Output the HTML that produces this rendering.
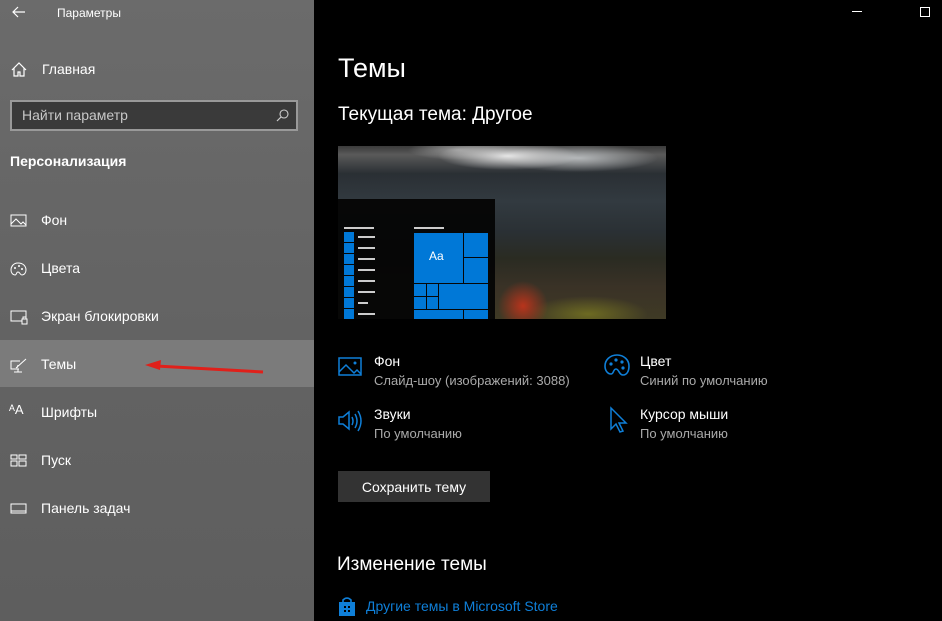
<!DOCTYPE html>
<html><head><meta charset="utf-8"><style>
*{margin:0;padding:0;box-sizing:border-box}
body{width:942px;height:621px;overflow:hidden;background:#000;font-family:"Segoe UI","Liberation Sans",sans-serif;position:relative;color:#fff}
.side{position:absolute;left:0;top:0;width:314px;height:621px;background:linear-gradient(180deg,#6b6b6b,#626262 60%,#5e5e5e)}
.t{position:absolute;white-space:nowrap}
.item{position:absolute;left:0;width:314px;height:48px}
.item .t{left:41px;top:16px;font-size:14px;color:#fff}
.item svg{position:absolute;left:10px;top:18px}
.prev{position:absolute;left:338px;top:146px;width:328px;height:173px;overflow:hidden;
background:
radial-gradient(ellipse 70px 14px at 170px 10px,#e6e6e6,rgba(200,200,200,0) 100%),
radial-gradient(ellipse 80px 14px at 240px 12px,#b5b8ba,rgba(160,160,160,0) 100%),
radial-gradient(ellipse 25px 25px at 185px 160px,#b8341c,rgba(180,50,30,0) 100%),
radial-gradient(ellipse 60px 18px at 250px 168px,#6d6a22,rgba(100,100,30,0) 100%),
radial-gradient(ellipse 50px 10px at 120px 4px,#999,rgba(150,150,150,0) 100%),
linear-gradient(180deg,#3a3a3a 0%,#5a5a5a 5%,#2a2f34 16%,#323a40 32%,#2a3034 50%,#2a2b22 65%,#3a3226 82%,#3f3a25 100%)}
.ov{position:absolute;left:0;top:53px;width:157px;height:120px;background:rgba(5,5,5,0.96)}
.b{position:absolute;background:#0078d7}
.l{position:absolute;background:#ccc;height:2px}
.blue{color:#0f7fd8}
</style></head><body>
<div class="side">
 <svg style="position:absolute;left:12px;top:6px" width="14" height="12" viewBox="0 0 14 12"><path d="M13 6H1M6 1L1 6l5 5" stroke="#fff" stroke-width="1.2" fill="none"/></svg>
 <div class="t" style="left:57px;top:6px;font-size:12px">Параметры</div>
 <svg style="position:absolute;left:11px;top:62px" width="16" height="15" viewBox="0 0 16 15"><path d="M1 8L8 1l7 7M3 6v8h4v-4h2v4h4V6" stroke="#fff" stroke-width="1.2" fill="none"/></svg>
 <div class="t" style="left:42px;top:61px;font-size:14px">Главная</div>
 <div style="position:absolute;left:10px;top:100px;width:288px;height:31px;border:2px solid #999;background:#3a3a3a"></div>
 <div class="t" style="left:22px;top:107px;font-size:14px;color:#c8c8c8">Найти параметр</div>
 <svg style="position:absolute;left:276px;top:109px" width="13" height="13" viewBox="0 0 13 13"><circle cx="8" cy="5" r="4" stroke="#ccc" stroke-width="1.1" fill="none"/><path d="M5 8L1 12" stroke="#ccc" stroke-width="1.2"/></svg>
 <div class="t" style="left:10px;top:153px;font-size:14px;font-weight:bold">Персонализация</div>

 <div class="item" style="top:196px"><svg width="18" height="14" viewBox="0 0 18 14"><rect x="1" y="1" width="15" height="11" stroke="#fff" fill="none"/><path d="M1 10l5-5 5 5 2-2 3 3" stroke="#fff" fill="none"/></svg><div class="t">Фон</div></div>
 <div class="item" style="top:244px"><svg width="17" height="16" viewBox="0 0 17 16"><path d="M8 1C3 1 1 5 1 8c0 3 2 5 4 5 2 0 1-3 3-3s2 3 4 3 4-2 4-5c0-4-3-7-8-7z" stroke="#fff" fill="none"/><circle cx="5" cy="6" r="1" fill="#fff"/><circle cx="9" cy="4" r="1" fill="#fff"/><circle cx="12" cy="7" r="1" fill="#fff"/></svg><div class="t">Цвета</div></div>
 <div class="item" style="top:292px"><svg width="18" height="15" viewBox="0 0 18 15"><path d="M12 11H1V1h15v7" stroke="#fff" fill="none"/><rect x="12" y="9" width="5" height="5" stroke="#fff" fill="none"/><path d="M13 9V7h3v2" stroke="#fff" fill="none"/></svg><div class="t">Экран блокировки</div></div>
 <div class="item" style="top:340px;background:#7b7b7b;height:47px"><svg width="18" height="16" viewBox="0 0 18 16"><path d="M9 11H1V3h9M8 11v3M4 14h8" stroke="#fff" fill="none"/><path d="M6 10l10-9M7 10l1-3" stroke="#fff" fill="none"/></svg><div class="t">Темы</div></div>
 <div class="item" style="top:388px"><div class="t" style="left:9px;top:14px;font-size:13px">ᴬA</div><div class="t">Шрифты</div></div>
 <div class="item" style="top:436px"><svg width="18" height="14" viewBox="0 0 18 14"><rect x="1" y="1" width="6" height="4" stroke="#fff" fill="none"/><rect x="9" y="1" width="7" height="4" stroke="#fff" fill="none"/><rect x="1" y="7" width="6" height="5" stroke="#fff" fill="none"/><rect x="9" y="7" width="7" height="5" stroke="#fff" fill="none"/></svg><div class="t">Пуск</div></div>
 <div class="item" style="top:484px"><svg width="18" height="14" viewBox="0 0 18 14"><rect x="1" y="2" width="15" height="9" stroke="#fff" fill="none"/><path d="M1 9h15" stroke="#fff"/></svg><div class="t">Панель задач</div></div>
 <svg style="position:absolute;left:140px;top:358px" width="130" height="20" viewBox="0 0 130 20"><path d="M16 8L123 14" stroke="#e0201a" stroke-width="3"/><path d="M5 7l16-5-1 10z" fill="#e0201a"/></svg>
</div>

<div class="t" style="left:852px;top:11px;width:10px;height:1px;background:#fff"></div>
<div class="t" style="left:920px;top:7px;width:10px;height:10px;border:1px solid #fff"></div>

<div class="t" style="left:338px;top:53px;font-size:27px">Темы</div>
<div class="t" style="left:338px;top:104px;font-size:19px">Текущая тема: Другое</div>

<div class="prev">
 <div class="ov"></div>
 <div class="l" style="left:6px;top:81px;width:30px"></div>
 <div class="l" style="left:76px;top:81px;width:30px"></div>
 <div class="b" style="left:6px;top:86px;width:10px;height:10px"></div><div class="l" style="left:20px;top:90px;width:17px"></div>
 <div class="b" style="left:6px;top:97px;width:10px;height:10px"></div><div class="l" style="left:20px;top:101px;width:17px"></div>
 <div class="b" style="left:6px;top:108px;width:10px;height:10px"></div><div class="l" style="left:20px;top:112px;width:17px"></div>
 <div class="b" style="left:6px;top:119px;width:10px;height:10px"></div><div class="l" style="left:20px;top:123px;width:17px"></div>
 <div class="b" style="left:6px;top:130px;width:10px;height:10px"></div><div class="l" style="left:20px;top:134px;width:17px"></div>
 <div class="b" style="left:6px;top:141px;width:10px;height:10px"></div><div class="l" style="left:20px;top:145px;width:17px"></div>
 <div class="b" style="left:6px;top:152px;width:10px;height:10px"></div><div class="l" style="left:20px;top:156px;width:10px"></div>
 <div class="b" style="left:6px;top:163px;width:10px;height:10px"></div><div class="l" style="left:20px;top:167px;width:17px"></div>
 <div class="b" style="left:76px;top:87px;width:49px;height:50px"><div class="t" style="left:15px;top:16px;font-size:12px;color:#fff">Aa</div></div>
 <div class="b" style="left:126px;top:87px;width:24px;height:24px"></div>
 <div class="b" style="left:126px;top:112px;width:24px;height:25px"></div>
 <div class="b" style="left:76px;top:138px;width:12px;height:12px"></div>
 <div class="b" style="left:89px;top:138px;width:11px;height:12px"></div>
 <div class="b" style="left:76px;top:151px;width:12px;height:12px"></div>
 <div class="b" style="left:89px;top:151px;width:11px;height:12px"></div>
 <div class="b" style="left:101px;top:138px;width:49px;height:25px"></div>
 <div class="b" style="left:76px;top:164px;width:49px;height:9px"></div>
 <div class="b" style="left:126px;top:164px;width:24px;height:9px"></div>
</div>

<svg style="position:absolute;left:338px;top:357px" width="25" height="20" viewBox="0 0 25 20"><rect x="1" y="1" width="22" height="17" stroke="#0f7fd8" stroke-width="1.5" fill="none"/><path d="M1 15l7-7 8 8 3-3 4 4" stroke="#0f7fd8" stroke-width="1.5" fill="none"/><circle cx="17" cy="6" r="1.5" fill="#0f7fd8"/></svg>
<div class="t" style="left:374px;top:353px;font-size:14px">Фон</div>
<div class="t" style="left:374px;top:373px;font-size:13px;color:#aaa">Слайд-шоу (изображений: 3088)</div>
<svg style="position:absolute;left:604px;top:354px" width="26" height="24" viewBox="0 0 26 24"><path d="M13 1C6 1 1 6 1 12c0 5 3 8 6 8s2-5 5-5 3 6 7 6 6-4 6-9C25 6 20 1 13 1z" stroke="#0f7fd8" stroke-width="1.6" fill="none"/><circle cx="7" cy="10" r="1.6" fill="#0f7fd8"/><circle cx="12" cy="6" r="1.6" fill="#0f7fd8"/><circle cx="18" cy="8" r="1.6" fill="#0f7fd8"/><circle cx="19" cy="14" r="1.6" fill="#0f7fd8"/></svg>
<div class="t" style="left:640px;top:353px;font-size:14px">Цвет</div>
<div class="t" style="left:640px;top:373px;font-size:13px;color:#aaa">Синий по умолчанию</div>
<svg style="position:absolute;left:338px;top:409px" width="26" height="24" viewBox="0 0 26 24"><path d="M1 8h4l6-5v17l-6-5H1z" stroke="#0f7fd8" stroke-width="1.5" fill="none"/><path d="M14 8q2 4 0 8M17 5q4 7 0 14M20 2q6 10 0 20" stroke="#0f7fd8" stroke-width="1.5" fill="none"/></svg>
<div class="t" style="left:374px;top:406px;font-size:14px">Звуки</div>
<div class="t" style="left:374px;top:426px;font-size:13px;color:#aaa">По умолчанию</div>
<svg style="position:absolute;left:609px;top:406px" width="20" height="28" viewBox="0 0 20 28"><path d="M2 2v21l5-5 4 8 3-1-4-8h7z" stroke="#0f7fd8" stroke-width="1.5" fill="none"/></svg>
<div class="t" style="left:640px;top:406px;font-size:14px">Курсор мыши</div>
<div class="t" style="left:640px;top:426px;font-size:13px;color:#aaa">По умолчанию</div>

<div style="position:absolute;left:338px;top:471px;width:152px;height:31px;background:#333"></div>
<div class="t" style="left:338px;top:479px;width:152px;text-align:center;font-size:14px">Сохранить тему</div>

<div class="t" style="left:337px;top:554px;font-size:19px">Изменение темы</div>
<svg style="position:absolute;left:338px;top:597px" width="18" height="19" viewBox="0 0 18 19"><path d="M5 5V3q4-4 8 0v2" stroke="#0f7fd8" stroke-width="1.6" fill="none"/><rect x="1" y="5" width="16" height="14" fill="#0f7fd8"/><path d="M6 9h2v2H6zM10 9h2v2h-2zM6 13h2v2H6zM10 13h2v2h-2z" fill="#000"/></svg>
<div class="t blue" style="left:366px;top:598px;font-size:14px">Другие темы в Microsoft Store</div>
</body></html>
